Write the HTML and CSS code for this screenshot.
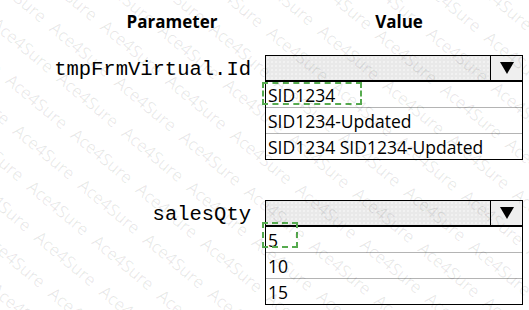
FILE: index.html
```html
<!DOCTYPE html>
<html lang="en">
<head>
    <meta charset="UTF-8">
    <title>Parameter Values</title>
    <link rel="stylesheet" href="styles.css">
</head>
<body>
<div class="sheet">
    <div class="heads">
        <div class="head head-param">Parameter</div>
        <div class="head head-value">Value</div>
    </div>

    <div class="param first">
        <div class="name">tmpFrmVirtual.Id</div>
        <div class="drop">
            <div class="box">
                <div class="field"></div>
                <div class="arrow"><span class="tri"></span></div>
            </div>
            <ul class="options">
                <li class="opt">SID1234<span class="mark mark-a"></span></li>
                <li class="opt">SID1234-Updated</li>
                <li class="opt">SID1234 SID1234-Updated</li>
            </ul>
        </div>
    </div>

    <div class="param second">
        <div class="name">salesQty</div>
        <div class="drop">
            <div class="box">
                <div class="field"></div>
                <div class="arrow"><span class="tri"></span></div>
            </div>
            <ul class="options">
                <li class="opt">5<span class="mark mark-b"></span></li>
                <li class="opt">10</li>
                <li class="opt">15</li>
            </ul>
        </div>
    </div>

    <!-- watermark -->
    <div class="wm">
        <div class="wm-in">
            <p>Ace4Sure Ace4Sure Ace4Sure Ace4Sure Ace4Sure Ace4Sure Ace4Sure Ace4Sure Ace4Sure Ace4Sure Ace4Sure</p>
            <p>Ace4Sure Ace4Sure Ace4Sure Ace4Sure Ace4Sure Ace4Sure Ace4Sure Ace4Sure Ace4Sure Ace4Sure Ace4Sure</p>
            <p>Ace4Sure Ace4Sure Ace4Sure Ace4Sure Ace4Sure Ace4Sure Ace4Sure Ace4Sure Ace4Sure Ace4Sure Ace4Sure</p>
            <p>Ace4Sure Ace4Sure Ace4Sure Ace4Sure Ace4Sure Ace4Sure Ace4Sure Ace4Sure Ace4Sure Ace4Sure Ace4Sure</p>
            <p>Ace4Sure Ace4Sure Ace4Sure Ace4Sure Ace4Sure Ace4Sure Ace4Sure Ace4Sure Ace4Sure Ace4Sure Ace4Sure</p>
            <p>Ace4Sure Ace4Sure Ace4Sure Ace4Sure Ace4Sure Ace4Sure Ace4Sure Ace4Sure Ace4Sure Ace4Sure Ace4Sure</p>
            <p>Ace4Sure Ace4Sure Ace4Sure Ace4Sure Ace4Sure Ace4Sure Ace4Sure Ace4Sure Ace4Sure Ace4Sure Ace4Sure</p>
            <p>Ace4Sure Ace4Sure Ace4Sure Ace4Sure Ace4Sure Ace4Sure Ace4Sure Ace4Sure Ace4Sure Ace4Sure Ace4Sure</p>
            <p>Ace4Sure Ace4Sure Ace4Sure Ace4Sure Ace4Sure Ace4Sure Ace4Sure Ace4Sure Ace4Sure Ace4Sure Ace4Sure</p>
            <p>Ace4Sure Ace4Sure Ace4Sure Ace4Sure Ace4Sure Ace4Sure Ace4Sure Ace4Sure Ace4Sure Ace4Sure Ace4Sure</p>
            <p>Ace4Sure Ace4Sure Ace4Sure Ace4Sure Ace4Sure Ace4Sure Ace4Sure Ace4Sure Ace4Sure Ace4Sure Ace4Sure</p>
            <p>Ace4Sure Ace4Sure Ace4Sure Ace4Sure Ace4Sure Ace4Sure Ace4Sure Ace4Sure Ace4Sure Ace4Sure Ace4Sure</p>
            <p>Ace4Sure Ace4Sure Ace4Sure Ace4Sure Ace4Sure Ace4Sure Ace4Sure Ace4Sure Ace4Sure Ace4Sure Ace4Sure</p>
            <p>Ace4Sure Ace4Sure Ace4Sure Ace4Sure Ace4Sure Ace4Sure Ace4Sure Ace4Sure Ace4Sure Ace4Sure Ace4Sure</p>
            <p>Ace4Sure Ace4Sure Ace4Sure Ace4Sure Ace4Sure Ace4Sure Ace4Sure Ace4Sure Ace4Sure Ace4Sure Ace4Sure</p>
            <p>Ace4Sure Ace4Sure Ace4Sure Ace4Sure Ace4Sure Ace4Sure Ace4Sure Ace4Sure Ace4Sure Ace4Sure Ace4Sure</p>
            <p>Ace4Sure Ace4Sure Ace4Sure Ace4Sure Ace4Sure Ace4Sure Ace4Sure Ace4Sure Ace4Sure Ace4Sure Ace4Sure</p>
            <p>Ace4Sure Ace4Sure Ace4Sure Ace4Sure Ace4Sure Ace4Sure Ace4Sure Ace4Sure Ace4Sure Ace4Sure Ace4Sure</p>
            <p>Ace4Sure Ace4Sure Ace4Sure Ace4Sure Ace4Sure Ace4Sure Ace4Sure Ace4Sure Ace4Sure Ace4Sure Ace4Sure</p>
        </div>
    </div>
</div>
</body>
</html>
```

FILE: styles.css
```css
body {
  margin: 0;
  background-color: #fff;
  font-family: "Open Sans", Arial, sans-serif;
  color: #000;
}

.sheet {
  position: relative;
  height: 310px;
  overflow: hidden;
  padding-top: 8px;
  box-sizing: border-box;
}

.heads {
  display: grid;
  grid-template-columns: 344px 110px;
  height: 26px;
  align-items: center;
}

.head {
  font-weight: bold;
  font-size: 17px;
  text-align: center;
}

.param {
  display: grid;
  grid-template-columns: 251px 258px;
  column-gap: 14px;
  align-items: start;
}

.first {
  margin-top: 21px;
}

.second {
  margin-top: 40px;
}

.name {
  font-family: "Liberation Mono", "Courier New", monospace;
  font-size: 20.5px;
  text-align: right;
  line-height: 27px;
  padding-top: 1px;
}

.box {
  display: flex;
  height: 24px;
  border: 1px solid #000;
  border-bottom-width: 2px;
  background-color: #e9e9e9;
  background-image: radial-gradient(#fbfbfb 0.6px, transparent 0.8px);
  background-size: 4px 4px;
}

.field {
  flex: 1;
}

.arrow {
  width: 31px;
  border-left: 1px solid #000;
  background-color: #efefef;
  display: flex;
  align-items: center;
  justify-content: center;
}

.tri {
  width: 0;
  height: 0;
  border-left: 7px solid transparent;
  border-right: 7px solid transparent;
  border-top: 12px solid #000;
}

.options {
  list-style: none;
  margin: 0;
  padding: 0;
  border: 1px solid #000;
  border-top: none;
}

.opt {
  position: relative;
  height: 25px;
  line-height: 26px;
  padding-left: 2px;
  font-size: 17.5px;
  border-top: 1px solid #b4b4b4;
}

.opt:first-child {
  border-top: none;
}

.mark {
  position: absolute;
  border: 2px dashed #56ab4f;
}

.mark-a {
  left: -4px;
  top: 0;
  width: 96px;
  height: 19px;
}

.mark-b {
  left: -4px;
  top: -5px;
  width: 32px;
  height: 22px;
}

/* watermark over the whole picture */
.wm {
  position: absolute;
  top: 0;
  left: 0;
  right: 0;
  bottom: 0;
  overflow: hidden;
  pointer-events: none;
}

.wm-in {
  position: absolute;
  top: -165px;
  left: -236px;
  width: 1000px;
  height: 640px;
  transform: rotate(40deg);
}

.wm-in p {
  margin: 0;
  white-space: nowrap;
  font-family: "Open Sans", Arial, sans-serif;
  font-size: 17px;
  line-height: 34px;
  word-spacing: 6px;
  color: rgba(0, 0, 0, 0.09);
}

.wm-in p:nth-child(even) {
  padding-left: 38px;
}
```
